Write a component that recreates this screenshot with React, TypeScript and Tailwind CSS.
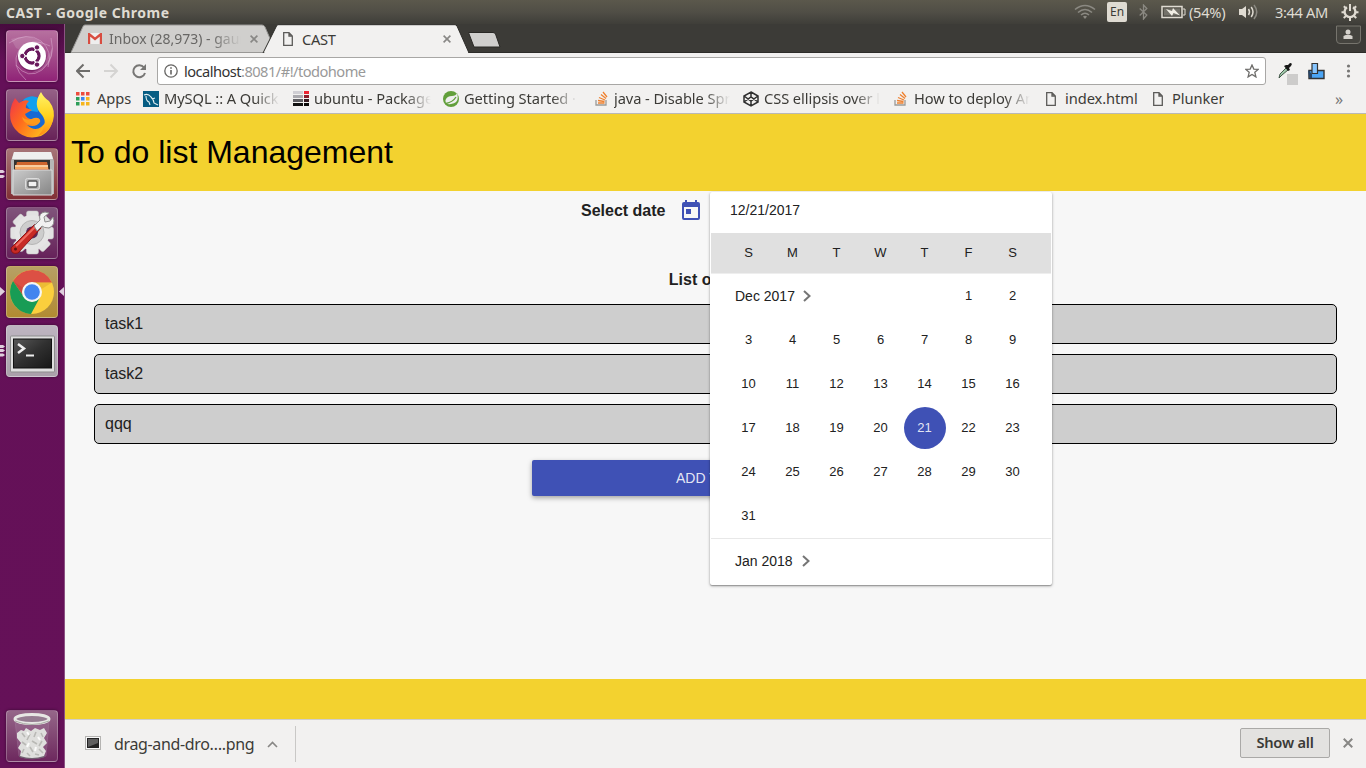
import type { ReactNode } from "react";

const fade = "[mask-image:linear-gradient(to_right,#000_78%,transparent)]";

function WindowBar() {
  return (
    <header className="flex h-6 shrink-0 items-center bg-linear-to-b from-[#5b584c] via-[#504e46] to-[#3f3e39] pl-[6px] text-[#dfdbd2]">
      <span className="grow text-[14px] font-bold tracking-[0.035em]">CAST - Google Chrome</span>
      <svg className="mr-[11px]" width="22" height="16" viewBox="0 0 22 16" fill="none" stroke="#8b8982" strokeWidth="1.6">
        <path d="M1 5.5Q11 -2.5 21 5.5M4 8.5Q11 2.5 18 8.5M7 11Q11 7.5 15 11" />
        <path d="M9 12.5Q11 11 13 12.5L11 15Z" fill="#8b8982" stroke="none" />
      </svg>
      <span className="mr-[12px] flex h-5 w-5 items-center justify-center rounded-[2px] bg-[#dfdbd2] text-[12px] text-[#3c3b37]">En</span>
      <svg className="mr-[13px]" width="9" height="16" viewBox="0 0 9 16" fill="none" stroke="#8b8982" strokeWidth="1.3">
        <path d="M0.7 4.5L7.8 11L4.5 15V1L7.8 4.5L0.7 11.5" />
      </svg>
      <svg className="mr-[3px]" width="25" height="14" viewBox="0 0 25 14">
        <path d="M1 1.5H21V12.5H1Z" fill="none" stroke="#dfdbd2" strokeWidth="1.5" />
        <path d="M3 3.5H19V10.5H3Z" fill="#74726a" />
        <path d="M5 4L11 6L12 3L19 10.5L12.5 8L11 11Z" fill="#f0ede4" />
        <path d="M22 4H24V10H22" fill="none" stroke="#dfdbd2" />
      </svg>
      <span className="w-[39px] whitespace-nowrap text-[14.67px] tracking-[-0.02em]">(54%)</span>
      <svg className="ml-[11px] mr-[16px]" width="20" height="16" viewBox="0 0 20 16" fill="none" stroke="#dfdbd2" strokeWidth="1.5">
        <path d="M0 5H3L7 2V14L3 11H0Z" fill="#dfdbd2" stroke="none" />
        <path d="M9.5 5Q11.5 8 9.5 11M12.2 3Q15.8 8 12.2 13" />
        <path d="M15 1Q20.5 8 15 15" stroke="#8b8982" />
      </svg>
      <span className="w-[54px] whitespace-nowrap text-[14.67px] tracking-[-0.025em]">3:44 AM</span>
      <svg className="ml-[12px] mr-[7px]" width="18" height="18" viewBox="0 0 18 18" fill="none" stroke="#dfdbd2">
        <path d="M6 4.2A5.4 5.4 0 1 0 12 4.2" strokeWidth="2.3" />
        <path d="M9 1V8" strokeWidth="2" />
        <path d="M2.8 3.3L5 5.3M15.2 3.3L13 5.3M0.5 9.3H3M15 9.3H17.5M2.7 15L5 13M15.3 15L13 13M9 15V18" strokeWidth="2" />
      </svg>
    </header>
  );
}

function Tile({ tone, children }: { tone: string; children: ReactNode }) {
  return (
    <div className={`flex h-[52px] w-[52px] shrink-0 items-center justify-center overflow-hidden rounded-[4px] border border-white/25 shadow-[0_0_3px_rgba(0,0,0,0.45)] ${tone}`}>
      {children}
    </div>
  );
}

function UbuntuIcon() {
  return (
    <svg width="50" height="50" viewBox="0 0 50 50">
      <g fill="none" stroke="#d6a3c9" strokeWidth="1" opacity=".6">
        <path d="M2 12Q20 0 34 10Q46 20 41 36M44 7Q49 27 35 39Q21 49 9 34M19 49Q3 35 12 19Q24 5 43 15" />
      </g>
      <path d="M4 8Q25 1 36 13L25 25L9 17ZM46 16Q46 38 25 42L38 30Z" fill="#fff" opacity=".13" />
      <circle cx="25" cy="26" r="14.5" fill="#500847" opacity=".4" />
      <circle cx="25" cy="25" r="14" fill="#fff" />
      <circle cx="25" cy="25" r="7" fill="none" stroke="#68175c" strokeWidth="3.3" />
      <path d="M25 25L15 25M25 25L30 16M25 25L30 34" stroke="#fff" strokeWidth="1.5" />
      <circle cx="25" cy="25" r="5.3" fill="#fff" />
      <g fill="#68175c" stroke="#fff" strokeWidth="1">
        <circle cx="15.3" cy="25" r="2.7" /><circle cx="30" cy="16.4" r="2.7" /><circle cx="30" cy="33.6" r="2.7" />
      </g>
    </svg>
  );
}

function FirefoxIcon() {
  return (
    <svg width="50" height="50" viewBox="0 0 50 50">
      <defs>
        <linearGradient id="fxBody" x1="0" y1="0" x2="1" y2=".6"><stop stopColor="#f0354b" /><stop offset=".45" stopColor="#ff6b1d" /><stop offset="1" stopColor="#ffbf1c" /></linearGradient>
        <linearGradient id="fxTail" x1="0" y1="0" x2="0" y2="1"><stop stopColor="#fff36a" /><stop offset=".55" stopColor="#ffd21c" /><stop offset="1" stopColor="#ff8918" /></linearGradient>
      </defs>
      <circle cx="26" cy="25" r="18" fill="#1769d3" />
      <path d="M16 10Q25 3 33 9L31 22L24 21Z" fill="#12a0ee" />
      <path d="M5 14L8 8L12 13Q17 9 22 11Q18 15 19 18L25 20L18 24Q20 31 30 29Q34 29 33 32Q29 38 20 35Q31 45 40 30L46 25Q46 40 34 46Q18 51 8 39Q0 29 5 14Z" fill="url(#fxBody)" />
      <path d="M34 2Q37 8 42 11Q49 20 46 31Q42 43 31 46Q42 34 35 25Q25 15 34 2Z" fill="url(#fxTail)" />
      <path d="M15 27Q20 32 27 28Q32 27 33 30Q31 34 25 34Q17 35 15 27Z" fill="#ff9a1c" />
    </svg>
  );
}

function FilesIcon() {
  return (
    <svg width="50" height="50" viewBox="0 0 50 50">
      <defs><linearGradient id="cab" x1="0" y1="0" x2="1" y2="1"><stop stopColor="#cbcbcb" /><stop offset="1" stopColor="#858585" /></linearGradient></defs>
      <path d="M7 3H44L47 12V45H4V12Z" fill="#b6b6b6" />
      <path d="M7 3H44L46 10H5Z" fill="#efefef" />
      <path d="M7 11H43V22H7Z" fill="#343330" />
      <path d="M10 13H40L42 22H8Z" fill="#ce652c" />
      <path d="M8 16H41V20H8Z" fill="#f2a663" />
      <path d="M8 17H41" stroke="#fff3da" />
      <path d="M6 21H45V46H6Z" fill="url(#cab)" stroke="#dadada" />
      <rect x="18.5" y="29.5" width="14" height="11" rx="2" fill="#b8b8b8" stroke="#ddd" />
      <rect x="21" y="32" width="9" height="6" rx="1" fill="#f2f2f2" stroke="#565656" strokeWidth="1.3" />
    </svg>
  );
}

function SettingsIcon() {
  return (
    <svg width="50" height="50" viewBox="0 0 50 50">
      <g fill="#e2e2e2" stroke="#c4c4c4" strokeWidth=".5">
        {[0, 45, 90, 135].map((a) => <rect key={a} x="19.5" y="3" width="12" height="43" rx="2" transform={`rotate(${a} 25 24.5)`} />)}
      </g>
      <circle cx="25" cy="24.5" r="17.5" fill="#e5e5e5" />
      <circle cx="25" cy="24.5" r="12" fill="#cdcdcd" stroke="#b5b5b5" />
      <circle cx="25" cy="24.5" r="6" fill="#5b2857" />
      <path d="M33 15L34 20L11 45Q4 47 4 40L27 17Z" fill="#c82a25" stroke="#8e1618" />
      <path d="M9 38L28 19" stroke="#ef6b61" strokeWidth="2" />
      <path d="M27 18L33 12Q31 5 38 4L42 5L37 9L38 14L43 13L46 9Q49 17 42 20Q37 20 35 18L30 23Z" fill="#f2f2f2" stroke="#8e8e8e" />
      <circle cx="8.5" cy="41" r="1.5" fill="#591414" />
    </svg>
  );
}

function ChromeIcon() {
  return (
    <svg width="50" height="50" viewBox="0 0 50 50">
      <circle cx="25" cy="25" r="22" fill="#fbcf3d" />
      <path d="M6 14A22 22 0 0 1 45 15.5H25A9.5 9.5 0 0 0 16.8 29.8Z" fill="#dc5044" />
      <path d="M6 14A22 22 0 0 0 24 47L33.3 29.8A9.6 9.6 0 0 1 16.8 29.8Z" fill="#189c55" />
      <path d="M25 15.5H45L33 23Z" fill="#d29427" opacity=".35" />
      <path d="M6 14L16 21L16.8 29.8Z" fill="#9d342d" opacity=".25" />
      <circle cx="25" cy="25" r="10" fill="#f6f6f4" />
      <circle cx="25" cy="25" r="7.8" fill="#4285ef" />
    </svg>
  );
}

function TerminalIcon() {
  return (
    <svg width="50" height="50" viewBox="0 0 50 50">
      <defs><linearGradient id="term" x1="0" y1="0" x2="1" y2="1"><stop stopColor="#585858" /><stop offset=".5" stopColor="#303030" /><stop offset="1" stopColor="#171717" /></linearGradient></defs>
      <rect x="3.5" y="10" width="44" height="36" rx="1" fill="#dedede" stroke="#8d8d8d" />
      <rect x="6.5" y="13" width="38" height="29" fill="url(#term)" stroke="#111" />
      <path d="M11 18L17 22.5L11 27" fill="none" stroke="#eee" strokeWidth="2.5" />
      <path d="M19 29.5H27" stroke="#eee" strokeWidth="2" />
    </svg>
  );
}

function TrashIcon() {
  return (
    <svg width="50" height="50" viewBox="0 0 50 50">
      <path d="M8 9H42L39 45Q25 51 12 45Z" fill="#a882a3" opacity=".3" stroke="#bd9ab8" />
      <ellipse cx="25" cy="45" rx="13" ry="3" fill="#6f6370" />
      <path d="M10 22L14 19L17 20L19 17L24 20L28 17L33 19L37 17L40 22L37 27L40 32L36 36L39 40L37 45Q25 49 13 45L14 40L11 37L14 32L10 27Z" fill="#dfdfdd" />
      <path d="M15 22L18 26M23 23L20 29M29 21L27 26M34 22L36 26M15 31L19 34M25 30L30 33M35 30L32 35M17 38L15 42M23 36L26 41M32 38L36 42M20 42L23 45M28 43L32 44" fill="none" stroke="#b9b9b5" strokeWidth="1.6" />
      <path d="M20 21L22 24M31 26L33 29M22 32L20 36M29 36L28 40" fill="none" stroke="#fbfbfa" strokeWidth="2" />
      <ellipse cx="25" cy="8" rx="17" ry="4.5" fill="#967c91" stroke="#e7e7e4" strokeWidth="3" />
      <path d="M8 10Q25 17 42 10" fill="none" stroke="#a9a9a5" strokeWidth="1" />
    </svg>
  );
}

function Launcher() {
  return (
    <aside className="relative flex w-[65px] shrink-0 flex-col gap-[7px] border-r border-[#8c5283] bg-linear-to-b from-[#470b3e] via-[#641058] via-5% to-[#651158] pl-[6px] pt-[6px]">
      <Tile tone="bg-linear-to-b from-[#b6709f] to-[#902277]"><UbuntuIcon /></Tile>
      <Tile tone="bg-linear-to-b from-[#956086] to-[#672258]"><FirefoxIcon /></Tile>
      <Tile tone="bg-linear-to-b from-[#a67478] to-[#812f35]"><FilesIcon /></Tile>
      <Tile tone="bg-linear-to-b from-[#80547b] to-[#66215a]"><SettingsIcon /></Tile>
      <Tile tone="bg-linear-to-b from-[#b7a064] to-[#b18b31]"><ChromeIcon /></Tile>
      <Tile tone="bg-linear-to-b from-[#beb5c1] to-[#aaa0aa]"><TerminalIcon /></Tile>
      <div className="mt-auto mb-[6px]"><Tile tone="bg-linear-to-b from-[#956689] to-[#6d285e]"><TrashIcon /></Tile></div>
      <svg className="absolute left-0 top-[140px]" width="65" height="200" viewBox="0 0 65 200" fill="#dfcfdd">
        <path d="M0 6H3L5 8L3 9H0ZM0 11H3L5 12L3 14H0ZM0 123L5 127.5L0 132ZM64 123V132L59 127.5ZM0 181H3L5 182.5L3 184H0ZM0 185H3L5 186.5L3 188H0ZM0 189.5H3L5 191L3 192.5H0Z" />
      </svg>
    </aside>
  );
}

function PageIcon() {
  return <svg className="shrink-0" width="10" height="14" viewBox="0 0 10 14" fill="none" stroke="#5c5b59" strokeWidth="1.3"><path d="M.7.7H6L9.3 4V13.3H.7ZM6 .7V4H9.3" /></svg>;
}

function Close({ size = 8, color = "#888785" }: { size?: number; color?: string }) {
  return <svg className="shrink-0" width={size} height={size} viewBox="0 0 8 8" stroke={color} strokeWidth="1.6"><path d="M.6.6L7.4 7.4M7.4.6L.6 7.4" /></svg>;
}

function Tabs() {
  return (
    <div className="relative flex h-[29px] shrink-0 items-center bg-[#3c3b37]">
      <svg className="absolute left-0 top-0" width="1301" height="29" viewBox="0 0 1301 29">
        <path d="M0 28.5H1301" stroke="#2d2c29" />
        <path d="M6 28.5L18 2.5Q18.5 1 20 1H197Q199 1 200 3L211 28.5Z" fill="#d0cfcd" stroke="#999896" />
        <path d="M198 29L211.500 2Q212 .7 213 .7H390Q391 .7 392 2L404 29Z" fill="#f2f1f0" stroke="#2d2c29" />
        <path d="M199.500 29H403" stroke="#f2f1f0" strokeWidth="2" />
        <path d="M403.500 8.500H428Q429.500 8.500 430.500 10L435 23H409Z" fill="#d0cfcd" stroke="#292825" />
        <path d="M1271.500 2V16Q1271.500 19.500 1275 19.500H1292Q1295.500 19.500 1295.500 16V2Z" fill="#45443f" stroke="#76746d" />
        <circle cx="1283" cy="8" r="2.500" fill="#d5d2cc" /><path d="M1278.500 15V12Q1283 9.500 1287.500 12V15Z" fill="#d5d2cc" />
      </svg>
      <div className="relative flex w-[199px] items-center pl-[23px]">
        <svg className="shrink-0" width="14" height="11" viewBox="0 0 14 11"><path d="M0 0H14V11H0Z" fill="#eee" /><path d="M1 11V1L7 6L13 1V11" fill="none" stroke="#d84c40" strokeWidth="2.4" /></svg>
        <span className={`ml-[7px] w-[132px] overflow-hidden whitespace-nowrap text-[14px] text-[#686765] ${fade}`}>Inbox (28,973) - gaurav</span>
        <span className="ml-[9px]"><Close /></span>
      </div>
      <div className="relative flex w-[204px] items-center pl-[19px]">
        <PageIcon /><span className="ml-[9px] w-[141px] text-[14.67px] tracking-[-0.02em] text-[#3c3b37]">CAST</span><Close />
      </div>
    </div>
  );
}

function Toolbar() {
  return (
    <div className="flex h-8 shrink-0 items-center bg-[#f2f1f0] pt-1">
      <svg className="ml-[11px] mr-[11px] shrink-0" width="71" height="16" viewBox="0 0 71 16" fill="none" strokeWidth="2">
        <path d="M14 8H1.500M7.500 1.500L1 8L7.500 14.500" stroke="#6e6d6b" />
        <path d="M28 8H40.500M34.500 1.500L41 8L34.500 14.500" stroke="#d5d4d2" />
        <path d="M68 4.500A6 6 0 1 0 69 10" stroke="#777674" /><path d="M70 1V7H64Z" fill="#777674" />
      </svg>
      <div className="-ml-px flex h-7 w-[1109px] shrink-0 items-center rounded-[3px] border border-[#a8a7a5] bg-white px-[6px]">
        <svg width="14" height="14" viewBox="0 0 14 14" fill="none" stroke="#666563" strokeWidth="1.3"><circle cx="7" cy="7" r="6.200" /><path d="M7 6V10.500M7 3.300V4.700" strokeWidth="1.6" /></svg>
        <span className="mb-px ml-[6px] grow text-[14.67px] tracking-[-0.037em] text-[#999]"><span className="text-[#333]">localhost</span>:8081/#!/todohome</span>
        <svg width="14" height="14" viewBox="0 0 14 14" fill="none" stroke="#6d6c6a" strokeWidth="1.300"><path d="M7 1L8.800 5.100L13.200 5.400L9.800 8.300L10.900 12.900L7 10.400L3.100 12.900L4.200 8.300L.8 5.400L5.200 5.100Z" /></svg>
      </div>
      <svg className="ml-[12px] shrink-0" width="82" height="28" viewBox="0 0 82 28">
        <rect x="9" y="17" width="11" height="11" fill="#cdcccb" />
        <path d="M1 21L2 17L8 11L10 13L4 18Z" fill="#9fc8aa" stroke="#384c3d" strokeWidth=".9" /><path d="M6 9L8 8L10 8L12 6Q15 6 13 9L11 11L12 13L10 14Z" fill="#171717" />
        <path d="M31 13.500H46V21.500H31Z" fill="#4ba5f5" stroke="#333" strokeWidth="1.400" /><path d="M34 6.500H39.500V16.500H34Z" fill="#86c5ff" stroke="#333" strokeWidth="1.200" /><path d="M30 13L34 17V21H31Z" fill="#294668" />
        <g fill="#777674"><circle cx="70.500" cy="9" r="1.600" /><circle cx="70.500" cy="14" r="1.600" /><circle cx="70.500" cy="19" r="1.600" /></g>
      </svg>
    </div>
  );
}

function StackIcon() {
  return <svg width="14" height="15" viewBox="0 0 14 15" fill="none"><path d="M1 9V14H11V9" stroke="#9b9a98" strokeWidth="1.3" /><path d="M3 12H9.500M3 9.500L9.500 10.500M4 6.500L10 9M6 3.500L11 7.500M8 1L12 6" stroke="#ef812f" strokeWidth="1.3" /></svg>;
}

const bookmarks: { text: string; box: string; label: string; icon: ReactNode }[] = [
  { text: "Apps", box: "ml-[11px] w-[67px] gap-[7px]", label: "", icon: <svg width="14" height="14" viewBox="0 0 14 14">{["#ed4c3d", "#ed4c3d", "#ed4c3d", "#2d9d58", "#3e85ee", "#f6b51d", "#2d9d58", "#f6b51d", "#f6b51d"].map((c, i) => <rect key={i} x={(i % 3) * 5} y={Math.floor(i / 3) * 5} width="3.5" height="3.5" fill={c} />)}</svg> },
  { text: "MySQL :: A Quick Guide", box: "w-[150px] gap-[5px]", label: `w-[116px] ${fade}`, icon: <svg width="16" height="16" viewBox="0 0 16 16"><path d="M0 0H16V16H0Z" fill="#075d83" /><path d="M1 4Q5 2 8 6Q11 9 11 12L15 14M3 5Q3 10 6 11L7 14M9 8L12 7" fill="none" stroke="#e4f1f4" strokeWidth="1.1" /></svg> },
  { text: "ubuntu - Packages", box: "w-[150px] gap-[5px]", label: `w-[117px] ${fade}`, icon: <svg width="16" height="15" viewBox="0 0 16 15">{["#d0cfd4", "#aaa9ae", "#5f5e63", "#111"].map((c, i) => <rect key={c} y={i * 4} width="10" height="3" fill={c} />)}{["#ed2331", "#8b1c28", "#351a20", "#090909"].map((c, i) => <rect key={c} x="11" y={i * 4} width="5" height="3" fill={c} />)}</svg> },
  { text: "Getting Started · Building", box: "w-[152px] gap-[5px]", label: `w-[113px] ${fade}`, icon: <svg width="16" height="16" viewBox="0 0 16 16"><circle cx="8" cy="8" r="8" fill="#629f3b" /><path d="M14 2Q17 12 8 13Q2 14 2.500 9Q4 5 9 5Q13 5 14 2Z" fill="#eee" /><path d="M3 12.500Q10 11 13 6" fill="none" stroke="#629f3b" strokeWidth="1.300" /></svg> },
  { text: "java - Disable Spring", box: "w-[148px] gap-[5px]", label: `w-[116px] ${fade}`, icon: <StackIcon /> },
  { text: "CSS ellipsis over line", box: "w-[151px] gap-[5px]", label: `w-[116px] ${fade}`, icon: <svg width="16" height="16" viewBox="0 0 16 16" fill="none" stroke="#303030" strokeWidth="1.5"><path d="M8 1L15 5V11L8 15L1 11V5ZM1 5L8 10L15 5M1 11L8 6L15 11M8 1V6M8 10V15" /></svg> },
  { text: "How to deploy Angular", box: "w-[151px] gap-[6px]", label: `w-[116px] ${fade}`, icon: <StackIcon /> },
  { text: "index.html", box: "ml-px w-[107px] gap-[9px]", label: "", icon: <PageIcon /> },
  { text: "Plunker", box: "w-[90px] gap-[9px]", label: "", icon: <PageIcon /> },
];

function Bookmarks() {
  return (
    <nav className="flex h-[29px] shrink-0 items-center border-b border-[#b9b8b6] bg-[#f2f1f0] pb-px text-[14.67px] tracking-[-0.005em] text-[#3c3b37]">
      {bookmarks.map((b) => (
        <div key={b.text} className={`flex shrink-0 items-center ${b.box}`}>
          <span className="flex shrink-0">{b.icon}</span>
          <span className={`-mt-px overflow-hidden whitespace-nowrap ${b.label}`}>{b.text}</span>
        </div>
      ))}
      <span className="ml-auto mr-[23px] text-[16px] text-[#777]">»</span>
    </nav>
  );
}

function Chevron() {
  return <svg width="8" height="12" viewBox="0 0 8 12" fill="none" stroke="#757575" strokeWidth="2"><path d="M1 1L6.500 6L1 11" /></svg>;
}

function Calendar() {
  const days = Array.from({ length: 31 }, (_, i) => i + 1);
  return (
    <section className="absolute left-[645px] top-[1px] flex h-[393px] w-[342px] flex-col rounded-[2px] bg-white px-px text-[13px] text-[#212121] shadow-[0_1px_3px_rgba(0,0,0,0.35),0_1px_1px_rgba(0,0,0,0.2)]">
      <div className="flex h-[41px] items-center pb-[4px] pl-[19px] text-[14px]">12/21/2017</div>
      <div className="grid h-10 grid-cols-[repeat(7,44px)] items-center bg-[#e0e0e0] pl-[15.5px] text-center">
        {["S", "M", "T", "W", "T", "F", "S"].map((d, i) => <span key={i}>{d}</span>)}
      </div>
      <div className="grid h-[265px] auto-rows-[44px] grid-cols-[repeat(7,44px)] border-t border-[#eee] pl-4 text-center">
        <div className="col-span-5 flex items-center gap-[8px] pl-2 text-[14px]">Dec 2017<Chevron /></div>
        {days.map((d) => (
          <div key={d} className="flex items-center justify-center">
            <span className={`flex h-[42px] w-[42px] items-center justify-center rounded-full pr-px ${d === 21 ? "bg-[#3f51b5] text-white/87" : ""}`}>{d}</span>
          </div>
        ))}
      </div>
      <div className="flex h-[46px] items-center gap-[9px] border-t border-[#e8e8e8] pb-px pl-6 text-[14px]">Jan 2018<Chevron /></div>
    </section>
  );
}

function TodoPage() {
  return (
    <main className="flex min-h-0 grow flex-col bg-[#f7f7f7] font-['Liberation_Sans',Arial,sans-serif] text-[#212121]">
      <h1 className="flex h-[77px] shrink-0 items-center bg-[#f3d22f] pb-[2px] pl-[6px] text-[32px] text-black">To do list Management</h1>
      <div className="relative flex grow flex-col">
        <div className="flex h-[39px] items-center pl-[516px] text-[16px] font-bold">
          Select date
          <svg className="mb-[2px] ml-[16px]" width="20" height="20" viewBox="0 0 20 20" fill="#3f51b5"><path fillRule="evenodd" d="M4 0H6V2H14V0H16V2H17Q19 2 19 4V18Q19 20 17 20H3Q1 20 1 18V4Q1 2 3 2H4ZM3 7V18H17V7ZM5 9H10V14H5Z" /></svg>
        </div>
        <h2 className="mt-[40px] text-center text-[16px] leading-[20px] font-bold">List of tasks</h2>
        <div className="mx-[29px] mt-[14px] flex flex-col gap-[10px]">
          {["task1", "task2", "qqq"].map((task) => <div key={task} className="flex h-10 items-center rounded-[5px] border border-black bg-[#cecece] px-[10px] text-[16px]">{task}</div>)}
        </div>
        <button className="mx-auto mt-4 h-9 w-[367px] rounded-[2px] bg-[#3f51b5] pr-px text-[14px] text-white/87 shadow-[0_2px_5px_rgba(0,0,0,0.35)]">ADD TASKS</button>
        <Calendar />
      </div>
      <footer className="h-10 shrink-0 bg-[#f3d22f]" />
    </main>
  );
}

function Downloads() {
  return (
    <div className="flex h-[49px] shrink-0 items-center border-t border-[#cfcecc] bg-[#f2f1f0] pl-5 text-[#3c3b37]">
      <svg className="mb-[3px]" width="16" height="14" viewBox="0 0 16 14"><rect x=".5" y=".5" width="15" height="13" fill="#f8f8f8" stroke="#b5b4b2" /><rect x="2" y="2" width="12" height="10" fill="#222" /><path d="M3 3H13V7L3 11Z" fill="#5f5f5f" /></svg>
      <span className="ml-[13px] w-[140px] whitespace-nowrap text-[16px] tracking-[-0.022em]">drag-and-dro….png</span>
      <svg className="ml-[13px]" width="11" height="7" viewBox="0 0 11 7" fill="none" stroke="#888785" strokeWidth="1.600"><path d="M1 6L5.500 1.500L10 6" /></svg>
      <span className="ml-[17px] h-9 w-px bg-[#c9c8c6]" />
      <button className="mb-[2px] ml-auto h-[30px] w-[90px] rounded-[2px] border border-[#aaa9a7] bg-[#e3e2e0] pb-[2px] text-[14.67px] font-semibold tracking-[-0.015em]">Show all</button>
      <span className="mb-[2px] ml-[13px] mr-[13px]"><Close size={10} /></span>
    </div>
  );
}

export default function App() {
  return (
    <div className="flex h-[768px] w-[1366px] flex-col overflow-hidden font-['Noto_Sans','Open_Sans',sans-serif]">
      <WindowBar />
      <div className="flex min-h-0 grow">
        <Launcher />
        <div className="flex min-w-0 grow flex-col"><Tabs /><Toolbar /><Bookmarks /><TodoPage /><Downloads /></div>
      </div>
    </div>
  );
}
